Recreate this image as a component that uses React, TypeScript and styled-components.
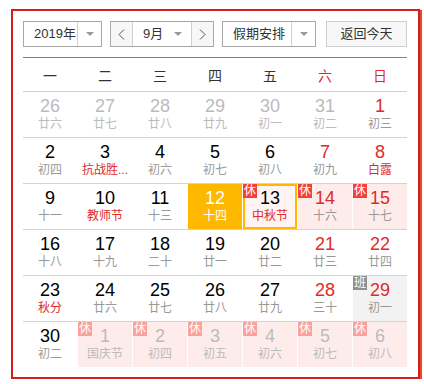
import styled, { createGlobalStyle } from 'styled-components';

const GlobalStyle = createGlobalStyle`
  body {
    margin: 0;
    background: #fff;
    font-family: "Liberation Sans", "Noto Sans CJK SC", sans-serif;
  }
`;

// 바깥 빨간 테두리
const Frame = styled.div`
  box-sizing: border-box;
  margin: 9px 0 0 11px;
  width: 409px;
  border: 2px solid #d21f1b;
  padding: 10px 11px 10px 10px;
  box-shadow: 2px 1px 0 #e8472c;
`;

// 상단 컨트롤 영역
const Toolbar = styled.div`
  display: flex;
  height: 26px;
  gap: 8px;
`;

const SelectBox = styled.div<{ $w: number }>`
  box-sizing: border-box;
  width: ${(p) => p.$w}px;
  height: 26px;
  border: 1px solid #a8a8a8;
  display: flex;
  background: #fff;
`;

const SelectLabel = styled.div<{ $padRight?: number }>`
  flex: 1;
  padding-left: 10px;
  padding-right: ${(p) => p.$padRight ?? 0}px;
  line-height: 24px;
  font-size: 13px;
  color: #333;
  white-space: nowrap;
  display: flex;
  align-items: center;
  justify-content: space-between;
`;

const CaretCell = styled.div`
  width: 23px;
  border-left: 1px solid #d0d0d0;
  display: flex;
  align-items: center;
  justify-content: center;
`;

const Caret = styled.span`
  width: 0;
  height: 0;
  border-left: 4px solid transparent;
  border-right: 4px solid transparent;
  border-top: 4px solid #999;
`;

const NavButton = styled.div<{ $side: 'left' | 'right' }>`
  width: 21px;
  background: #f7f7f7;
  ${(p) => (p.$side === 'left' ? 'border-right' : 'border-left')}: 1px solid #d0d0d0;
  display: flex;
  align-items: center;
  justify-content: center;
`;

const TodayButton = styled.div`
  box-sizing: border-box;
  margin-left: 2px;
  width: 81px;
  height: 26px;
  border: 1px solid #cfcfcf;
  background: #f7f7f7;
  font-size: 13px;
  color: #333;
  line-height: 24px;
  text-align: center;
`;

// 요일 헤더
const WeekHeader = styled.div`
  margin-top: 10px;
  display: grid;
  grid-template-columns: repeat(7, 1fr);
  column-gap: 1px;
  height: 33px;
  border-top: 1px solid #e65a50;
  border-bottom: 1px solid #cfcfcf;
`;

const WeekDay = styled.div<{ $red?: boolean }>`
  display: flex;
  align-items: center;
  justify-content: center;
  font-size: 14px;
  color: ${(p) => (p.$red ? '#e02a2a' : '#333')};
`;

const WeekRow = styled.div`
  display: grid;
  grid-template-columns: repeat(7, 1fr);
  column-gap: 1px;
  height: 45px;
  border-bottom: 1px solid #d3d3d3;
  &:last-child {
    border-bottom: none;
  }
`;

const Cell = styled.div<{ $bg: string; $frame?: boolean }>`
  position: relative;
  box-sizing: border-box;
  padding-top: 4px;
  text-align: center;
  background: ${(p) => p.$bg};
  box-shadow: ${(p) => (p.$frame ? 'inset 0 0 0 2px #ffb800' : 'none')};
  overflow: hidden;
`;

const DayNum = styled.div<{ $color: string }>`
  font-size: 18px;
  line-height: 20px;
  color: ${(p) => p.$color};
`;

const Lunar = styled.div<{ $color: string }>`
  font-size: 12px;
  line-height: 16px;
  color: ${(p) => p.$color};
  white-space: nowrap;
`;

const Badge = styled.span<{ $bg: string }>`
  position: absolute;
  top: 0;
  left: 0;
  width: 14px;
  height: 14px;
  background: ${(p) => p.$bg};
  color: #fff;
  font-size: 12px;
  line-height: 14px;
  text-align: center;
`;

type Day = {
  d: number;
  l: string;
  other?: boolean;
  red?: boolean;
  fest?: boolean;
  rest?: boolean;
  work?: boolean;
  sel?: boolean;
  today?: boolean;
};

const weeks: Day[][] = [
  [
    { d: 26, l: '廿六', other: true },
    { d: 27, l: '廿七', other: true },
    { d: 28, l: '廿八', other: true },
    { d: 29, l: '廿九', other: true },
    { d: 30, l: '初一', other: true },
    { d: 31, l: '初二', other: true },
    { d: 1, l: '初三', red: true },
  ],
  [
    { d: 2, l: '初四' },
    { d: 3, l: '抗战胜...', fest: true },
    { d: 4, l: '初六' },
    { d: 5, l: '初七' },
    { d: 6, l: '初八' },
    { d: 7, l: '初九', red: true },
    { d: 8, l: '白露', red: true, fest: true },
  ],
  [
    { d: 9, l: '十一' },
    { d: 10, l: '教师节', fest: true },
    { d: 11, l: '十三' },
    { d: 12, l: '十四', sel: true },
    { d: 13, l: '中秋节', fest: true, rest: true, today: true },
    { d: 14, l: '十六', red: true, rest: true },
    { d: 15, l: '十七', red: true, rest: true },
  ],
  [
    { d: 16, l: '十八' },
    { d: 17, l: '十九' },
    { d: 18, l: '二十' },
    { d: 19, l: '廿一' },
    { d: 20, l: '廿二' },
    { d: 21, l: '廿三', red: true },
    { d: 22, l: '廿四', red: true },
  ],
  [
    { d: 23, l: '秋分', fest: true },
    { d: 24, l: '廿六' },
    { d: 25, l: '廿七' },
    { d: 26, l: '廿八' },
    { d: 27, l: '廿九' },
    { d: 28, l: '三十', red: true },
    { d: 29, l: '初一', red: true, work: true },
  ],
  [
    { d: 30, l: '初二' },
    { d: 1, l: '国庆节', other: true, rest: true },
    { d: 2, l: '初四', other: true, rest: true },
    { d: 3, l: '初五', other: true, rest: true },
    { d: 4, l: '初六', other: true, rest: true },
    { d: 5, l: '初七', other: true, rest: true },
    { d: 6, l: '初八', other: true, rest: true },
  ],
];

function Chevron({ dir }: { dir: 'left' | 'right' }) {
  return (
    <svg width="7" height="11" viewBox="0 0 7 11">
      <polyline
        points={dir === 'left' ? '6,0.5 1,5.5 6,10.5' : '1,0.5 6,5.5 1,10.5'}
        fill="none"
        stroke="#555"
        strokeWidth="1"
      />
    </svg>
  );
}

function DayCell({ day }: { day: Day }) {
  let bg = '#fff';
  if (day.rest) bg = day.today ? '#fff3f3' : '#feeceb';
  if (day.work) bg = '#f2f2f2';
  if (day.sel) bg = '#ffb800';

  let numColor = '#000';
  let lunarColor = '#999';
  if (day.red) numColor = '#e02a2a';
  if (day.fest) lunarColor = '#e02a2a';
  if (day.other) {
    numColor = '#bbb';
    lunarColor = '#bbb';
  }
  if (day.sel) {
    numColor = '#fff';
    lunarColor = '#fff';
  }

  return (
    <Cell $bg={bg} $frame={day.today}>
      {day.rest && <Badge $bg={day.other ? '#f7a39b' : '#f2403a'}>休</Badge>}
      {day.work && <Badge $bg="#8f8f8f">班</Badge>}
      <DayNum $color={numColor}>{day.d}</DayNum>
      <Lunar $color={lunarColor}>{day.l}</Lunar>
    </Cell>
  );
}

export default function App() {
  return (
    <>
      <GlobalStyle />
      <Frame>
        <Toolbar>
          <SelectBox $w={79}>
            <SelectLabel>2019年</SelectLabel>
            <CaretCell>
              <Caret />
            </CaretCell>
          </SelectBox>
          <SelectBox $w={104}>
            <NavButton $side="left">
              <Chevron dir="left" />
            </NavButton>
            <SelectLabel $padRight={9}>
              9月
              <Caret />
            </SelectLabel>
            <NavButton $side="right">
              <Chevron dir="right" />
            </NavButton>
          </SelectBox>
          <SelectBox $w={94}>
            <SelectLabel>假期安排</SelectLabel>
            <CaretCell>
              <Caret />
            </CaretCell>
          </SelectBox>
          <TodayButton>返回今天</TodayButton>
        </Toolbar>
        <WeekHeader>
          {['一', '二', '三', '四', '五', '六', '日'].map((w, i) => (
            <WeekDay key={w} $red={i >= 5}>
              {w}
            </WeekDay>
          ))}
        </WeekHeader>
        {weeks.map((week, wi) => (
          <WeekRow key={wi}>
            {week.map((day, di) => (
              <DayCell key={di} day={day} />
            ))}
          </WeekRow>
        ))}
      </Frame>
    </>
  );
}
